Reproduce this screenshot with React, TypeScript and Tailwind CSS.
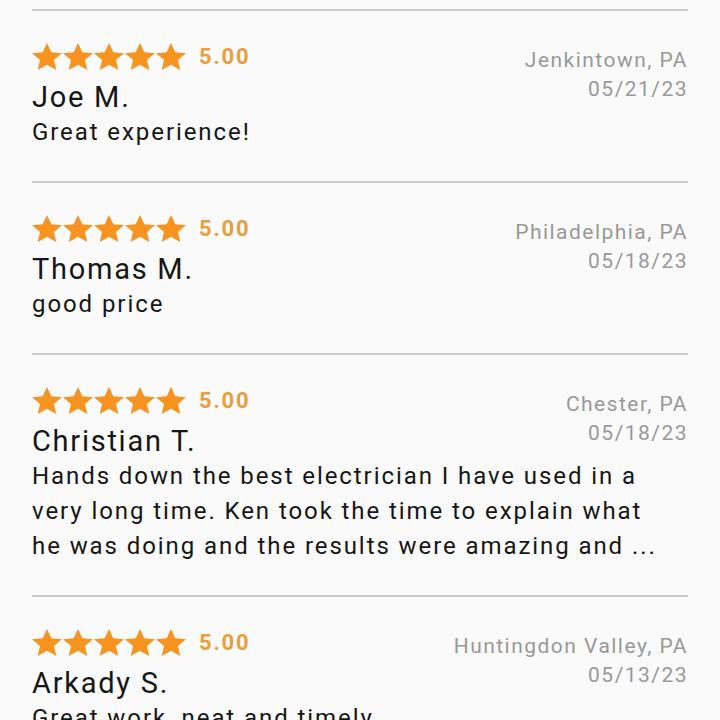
const reviews = [
  {
    name: 'Joe M.',
    text: 'Great experience!',
    place: 'Jenkintown, PA',
    date: '05/21/23',
  },
  {
    name: 'Thomas M.',
    text: 'good price',
    place: 'Philadelphia, PA',
    date: '05/18/23',
  },
  {
    name: 'Christian T.',
    text: 'Hands down the best electrician I have used in a very long time. Ken took the time to explain what he was doing and the results were amazing and ...',
    place: 'Chester, PA',
    date: '05/18/23',
  },
  {
    name: 'Arkady S.',
    text: 'Great work, neat and timely.',
    place: 'Huntingdon Valley, PA',
    date: '05/13/23',
  },
];

function Star() {
  return (
    <svg width="30" height="27" viewBox="1.2 1.6 21.6 20.5" preserveAspectRatio="none" className="shrink-0">
      <path
        fill="#f7931e"
        d="M12 1.6l3.1 7.1 7.7.7-5.8 5.1 1.7 7.6L12 18.1l-6.7 4 1.7-7.6-5.8-5.1 7.7-.7z"
      />
    </svg>
  );
}

export default function App() {
  return (
    <div className="min-h-screen bg-[#fafafa] px-8 pt-[9px] font-['Roboto',sans-serif]">
      <div className="h-[2px] bg-[#cccccc]" />
      {reviews.map((r, i) => (
        <div key={i}>
          <div className="grid grid-cols-[1fr_auto] pt-[30px] pb-[31px]">
            <div className="flex h-[30px] items-center gap-[1px]">
              <Star />
              <Star />
              <Star />
              <Star />
              <Star />
              <span className="ml-3 text-[22px] font-bold tracking-[0.08em] text-[#eb9f3a]">5.00</span>
            </div>
            <div className="row-span-2 pt-[5px] text-right text-[21px] leading-[29px] tracking-[0.07em] text-[#999999]">
              <div>{r.place}</div>
              <div>{r.date}</div>
            </div>
            <div className="mt-[8px] text-[29px] leading-[36px] tracking-[0.06em] text-[#161616]">{r.name}</div>
            <p className="col-span-2 pr-4 text-[24px] leading-[35px] tracking-[0.08em] text-[#161616]">{r.text}</p>
          </div>
          <div className="h-[2px] bg-[#cccccc]" />
        </div>
      ))}
    </div>
  );
}
